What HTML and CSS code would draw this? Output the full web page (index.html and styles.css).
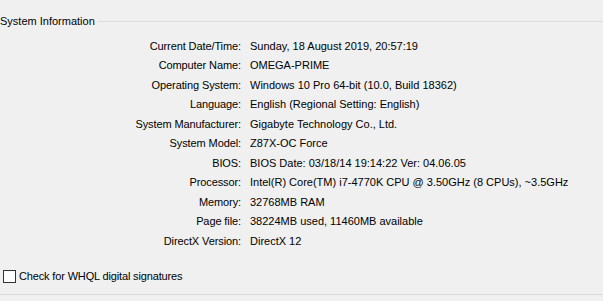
FILE: index.html
```html
<!DOCTYPE html>
<html>
<head>
<meta charset="utf-8">
<link rel="stylesheet" href="styles.css">
</head>
<body>
<div class="panel">
  <div class="group-head">
    <span class="group-title">System Information</span>
    <span class="group-line"></span>
  </div>
  <div class="info">
    <div class="label">Current Date/Time:</div><div class="value">Sunday, 18 August 2019, 20:57:19</div>
    <div class="label">Computer Name:</div><div class="value">OMEGA-PRIME</div>
    <div class="label">Operating System:</div><div class="value">Windows 10 Pro 64-bit (10.0, Build 18362)</div>
    <div class="label">Language:</div><div class="value">English (Regional Setting: English)</div>
    <div class="label">System Manufacturer:</div><div class="value">Gigabyte Technology Co., Ltd.</div>
    <div class="label">System Model:</div><div class="value">Z87X-OC Force</div>
    <div class="label">BIOS:</div><div class="value">BIOS Date: 03/18/14 19:14:22 Ver: 04.06.05</div>
    <div class="label">Processor:</div><div class="value">Intel(R) Core(TM) i7-4770K CPU @ 3.50GHz (8 CPUs), ~3.5GHz</div>
    <div class="label">Memory:</div><div class="value">32768MB RAM</div>
    <div class="label">Page file:</div><div class="value">38224MB used, 11460MB available</div>
    <div class="label">DirectX Version:</div><div class="value">DirectX 12</div>
  </div>
  <label class="check-row">
    <span class="checkbox"></span>
    <span class="check-text">Check for WHQL digital signatures</span>
  </label>
  <div class="bottom-line"></div>
</div>
</body>
</html>
```

FILE: styles.css
```css
html, body {
  margin: 0;
  padding: 0;
  background: #f0f0f0;
}
body {
  font-family: "Liberation Sans", Arial, sans-serif;
  font-size: 11px;
  color: #000;
  width: 603px;
  height: 301px;
  overflow: hidden;
}
.panel {
  display: flex;
  flex-direction: column;
}
.group-head {
  display: flex;
  align-items: center;
  height: 14px;
  margin-top: 14px;
}
.group-title {
  line-height: 14px;
  padding-right: 3px;
}
.group-line {
  flex: 1;
  height: 1px;
  background: #dcdcdc;
}
.info {
  display: grid;
  grid-template-columns: 241px 1fr;
  column-gap: 9px;
  grid-auto-rows: 19.5px;
  margin-top: 8px;
  align-items: center;
}
.label {
  text-align: right;
  white-space: nowrap;
  letter-spacing: -0.1px;
}
.value {
  white-space: nowrap;
}
.check-row {
  display: flex;
  align-items: center;
  gap: 3px;
  margin-top: 19px;
  padding-left: 3px;
  height: 13px;
}
.checkbox {
  width: 11px;
  height: 11px;
  border: 1px solid #333;
  background: #fff;
}
.check-text {
  letter-spacing: -0.15px;
}
.bottom-line {
  margin-top: 11px;
  height: 1px;
  background: #dcdcdc;
}
```
